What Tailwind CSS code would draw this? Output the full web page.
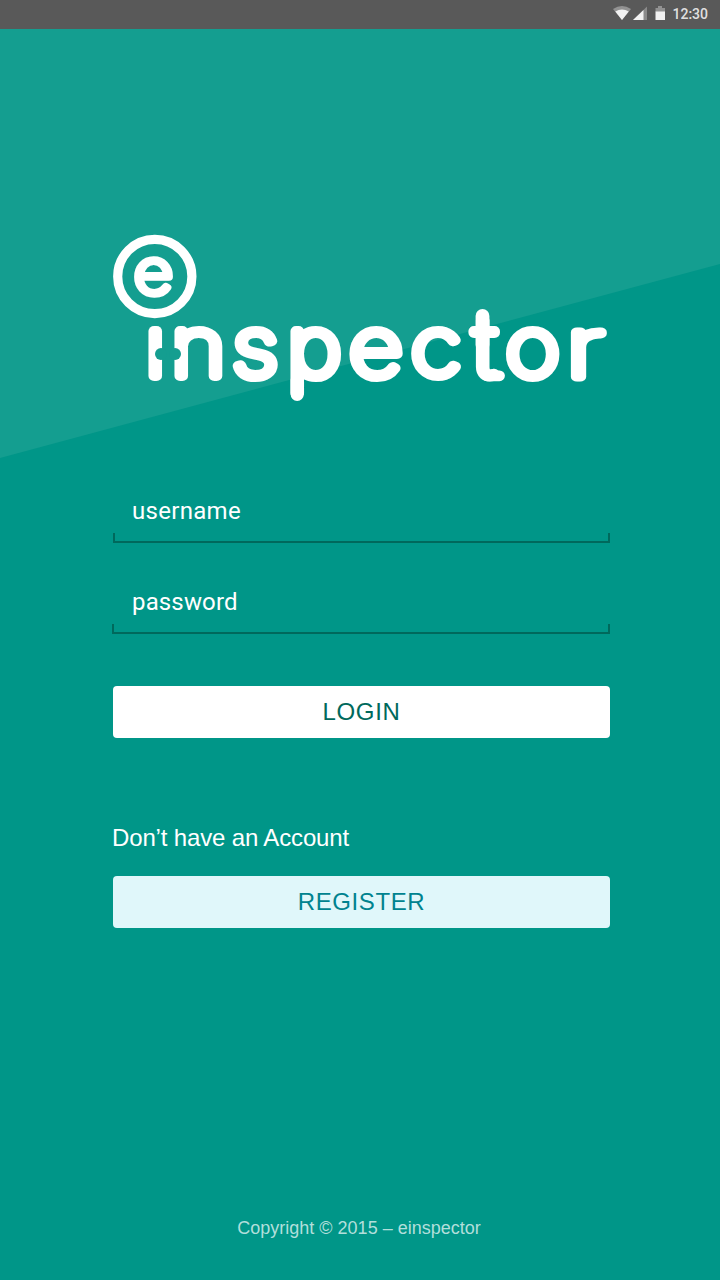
<!DOCTYPE html>
<html lang="en">
<head>
<meta charset="utf-8">
<title>einspector – Login</title>
<script src="https://cdn.jsdelivr.net/npm/@tailwindcss/browser@4"></script>
</head>
<body class="w-[720px] h-[1280px] overflow-hidden bg-[#009688] font-['Liberation_Sans',sans-serif] text-white">
<div class="relative isolate flex flex-col w-full h-full">
  <div class="absolute inset-0 -z-10 bg-[#149e90] [clip-path:polygon(0_0,720px_0,720px_264px,0_458px)]"></div>

  <header class="h-[29px] shrink-0 bg-[#595959] flex items-center justify-end pr-3 pb-[2px]">
    <svg class="w-[100px] h-7 shrink-0 mr-[-40px]" viewBox="612 0 100 28" fill="#f2f2f2">
      <path d="M613 9 Q622 3 631 9 L622 20Z" fill="#929292"/>
      <path d="M615.3 11.5 Q622 7.500 628.7 11.5 L622 20Z"/>
      <path d="M647 6.5V20H633Z" fill="#8a8a8a"/>
      <path d="M643.5 10V20H633Z"/>
      <path d="M655.5 8h2.5V6h4v2h3v4h-9.500Z" fill="#929292"/>
      <path d="M655.500 11.500h9.500V20h-9.500Z"/>
    </svg>
    <span class="font-['Roboto',sans-serif] text-[14px] leading-none text-[#f2f2f2]/90 font-medium">12:30</span>
  </header>

  <main class="flex flex-col px-[113px]">
    <h1 class="mt-[201px] h-[175px]">
      <svg class="w-[500px] h-[175px] overflow-visible" viewBox="113 230 500 175" role="img" aria-label="einspector">
        <circle cx="154.800" cy="276.500" r="37.100" fill="none" stroke="#fff" stroke-width="9.200"/>
        <g fill="#fff" stroke="#fff" stroke-linejoin="round" stroke-linecap="round" font-family="Inter" font-weight="100">
          <text transform="translate(134 292.800) scale(1.130 1)" font-size="60" stroke-width="7.400">e</text>
          <g font-size="83" stroke-width="10.200">
            <text transform="translate(145.200 376.300) scale(1.120 1)" x="0 23.200 77.800 126.800 182.200 237.300 293.300 322">ınspecto</text>
            <text transform="translate(566 376.500) scale(1.400 1)" stroke-width="9">r</text>
          </g>
          <path d="M482.500 316V345" fill="none" stroke-width="13.800"/>
          <path d="M487 375.800H499.500" fill="none" stroke-width="10.800"/>
          <path d="M297.200 380V394.300" fill="none" stroke-width="13.200"/>
        </g>
        <g fill="#149e90">
          <circle cx="161" cy="354" r="6"/>
          <circle cx="175" cy="354" r="6"/>
        </g>
      </svg>
    </h1>

    <form class="flex flex-col">
      <label class="mt-[84px] h-[44px] flex flex-col justify-end">
        <span class="pl-[19px] h-[44px] font-['Roboto',sans-serif] text-[24px] leading-[44px] tracking-[0.3px]">username</span>
      </label>
      <span class="h-[10px] w-[497px] border-2 border-t-0 border-[#00695c]"></span>
      <label class="mt-[37px] h-[44px]">
        <span class="block pl-[19px] font-['Roboto',sans-serif] text-[24px] leading-[44px] tracking-[0.15px]">password</span>
      </label>
      <span class="h-[10px] w-[498px] -ml-px border-2 border-t-0 border-[#00695c]"></span>
      <button type="button" class="mt-[52px] h-[52px] w-[497px] rounded bg-white text-[#00695c] text-[24px] tracking-[0.7px]">LOGIN</button>
    </form>

    <p class="mt-[84px] h-8 leading-8 text-[24px] tracking-[-0.15px] -ml-px">Don’t have an Account</p>
    <button type="button" class="mt-[22px] h-[52px] w-[497px] rounded bg-[#e0f7fa] text-[#00838f] text-[24px] tracking-[0.6px]">REGISTER</button>
  </main>

  <footer class="mt-auto mb-[41px] mr-[2px] text-center text-[18px] leading-[22px] text-[#b2dfdb]">Copyright © 2015 – einspector</footer>
</div>
</body>
</html>
